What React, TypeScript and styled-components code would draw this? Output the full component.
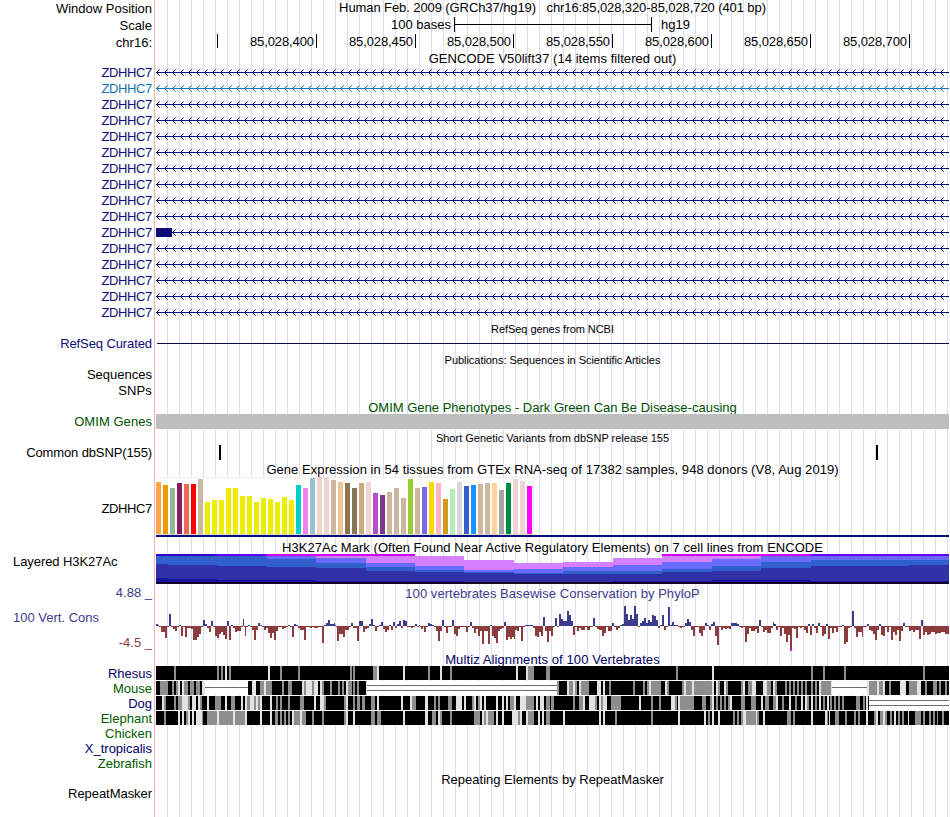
import React from 'react';
import styled, { createGlobalStyle } from 'styled-components';

const LEFT = 156;
const RIGHT = 949;
const PLOT = RIGHT - LEFT;

/* Colors */
const NAVY = '#0c0c78';
const TEAL = '#1474b4';
const GREEN = '#005000';
const POS = '#3c3c8c';
const NEG = '#8c3c3c';

/* GTEx */
const tissues: [number, string][] = [
  [52, '#ffa54f'], [49, '#ee9a00'], [46, '#8fbc8f'], [51, '#8b1c62'], [50, '#ee6a50'], [50, '#ff0000'],
  [55, '#cdb79e'], [32, '#eeee00'], [34, '#eeee00'], [34, '#eeee00'], [46, '#eeee00'], [46, '#eeee00'],
  [38, '#eeee00'], [38, '#eeee00'], [32, '#eeee00'], [36, '#eeee00'], [35, '#eeee00'], [32, '#eeee00'],
  [37, '#eeee00'], [34, '#eeee00'], [49, '#00cdcd'], [46, '#ee82ee'], [56, '#9ac0cd'], [57, '#eed5d2'],
  [57, '#eed5d2'], [54, '#cdb79e'], [52, '#eec591'], [51, '#8b7355'], [46, '#8b7355'], [51, '#cdaa7d'],
  [52, '#eed5d2'], [41, '#b452cd'], [39, '#7a378b'], [42, '#cdb79e'], [46, '#cdb79e'], [36, '#cdb79e'],
  [55, '#9acd32'], [46, '#cdb79e'], [47, '#7a67ee'], [52, '#ffd700'], [51, '#ffb6c1'], [35, '#cd9b1d'],
  [45, '#b4eeb4'], [52, '#d9d9d9'], [48, '#3a5fcd'], [49, '#1e90ff'], [50, '#cdb79e'], [51, '#cdb79e'],
  [51, '#ffd39b'], [44, '#a6a6a6'], [51, '#008b45'], [55, '#eed5d2'], [53, '#eed5d2'], [48, '#ff00ff'],
];

/* H3K27Ac: width, cap color, then heights of pink / periwinkle / blue / indigo / dark */
const marks: [number, string, number[]][] = [
  [12, '#2c00c8', [0, 0, 8, 14, 4]],
  [49, '#2c00c8', [0, 0, 9, 14, 3]],
  [50, '#6400ff', [0, 0, 10, 14, 2]],
  [49, '#d200f0', [0, 3, 8, 13, 2]],
  [50, '#d200f0', [2, 5, 5, 13, 1]],
  [49, '#d200f0', [7, 4, 4, 10, 1]],
  [49, '', [10, 4, 2, 9, 1]],
  [50, '', [10, 2, 1, 9, 0]],
  [49, '', [6, 4, 1, 8, 0]],
  [50, '', [5, 4, 3, 8, 0]],
  [49, '', [7, 6, 3, 7, 1]],
  [50, '#d200f0', [6, 7, 3, 9, 1]],
  [49, '#d200f0', [3, 7, 5, 9, 2]],
  [50, '#d200f0', [0, 6, 6, 12, 2]],
  [98, '#6400ff', [0, 4, 6, 15, 1]],
  [40, '#6400ff', [0, 4, 5, 16, 1]],
];
const markColors = ['#d480ff', '#6a6aff', '#3060cc', '#3030a8', '#1414a0'];

/* PhyloP scores, 2px per base unless "x<width>" follows */
const scores: [number, string][] = [
  [156, '2 1x1 -1x2 -6x4 -12 -1 12 -1 -3 -5 -1 1 -10 -1 -11 -2x4 -3 -14x4 -11 -8 -1 6 2 -2 -6 5 -1 -10 -12 -8 -6 -9 -13 5 -14 1 -2 -6 -5x4 -1 7x1 -1x1 -10x1 -1x2 1 -1 -4 -14 -4 3 1 -1 -4 -2 -7 -12 -7 -14 -5 -1x4 -3 -2 -1 1 -1 -11 2 1 -2 -4x4 -14 -1x4 -2 -1 -2x4 -1x4 -17 1 3 6 2x4 3x1 1x1 -1x1 -15 -8 -8 -11 -4x4 -1 3 -2x4 -15 5x4 -6 -3 -2 2 7 1 -5 -1 1 4 -3 -6 -4 1 -4 4 -2 2 5 -2 6 5 -1x4 -2 -1 2 -1'],
  [419, '1x1 -1x1 -3 -1x1 -6 -1 3 2 1 -1 -5 -15 -5 6 -1 -7 -1x4 6 -8 -10 -3 -1x6 -6 -1 4 -2 -7 -3 -10 -5 -18 -5 -5 -18 1 -10 -12 -17 -5 -3 -2 4 -14 -11 -13 -11 -13x1 -4 -5 -1 -15 -1 1x8 -2 -10 -11 -6 -10 9 -5 -16 -5 -10 -1 8 -1 12 7 5x4 15 11 5 -9 -1 -5 -2 -4x4 -1 -4x3 -1x1 -1 8 -1 -3 -4x3 -10 -7 -1 -5x4 3 -1 -4 -2 1 2 20 12 6 11 7 20 12 -1 3 5 8 3 6 4 11 10 6 -2 1 11 -4 -1 19'],
  [670, '1 4 1x4 -1 -2 -1x3 3 7 4 -4 -10 -1x4 -7 -10 -4 3 1 -4 2 4 -10 -19 -1 -4 -2 -3 -2 -3 3x6 2 -1 -2 -1 -16 -8 -2 -5x4 -3 -7 6 -1 -6 -4 -7x4 -2 4x1 2 -4 -1 -10 -2 -8 -16 -9 -23 -2 -3 -12 -1 -2 -1 -4 -7 2 -9 2 -2 -7 3 -1 -10 -8 2 -13 -2 -7 -2 -6 -1x4 1 -18 -16 -2 -1 15 -2 -11 -6 -6 -11x1 -1x4 2 -4 -5 -8 -14 -4 2 -9 -10 -1 -6 -1 -14 -6 -9 -4 -15 -5 3 -1 -1 -5 -4 -6 -4x4 -13 6 -9 -6 -9 -8 -6x4 -8 -7x4 -6x4 -8x4'],
];

/* Alignment runs: k = match, g = weak, l = faint, s = single line gap, d = double line gap */
const species = [
  { name: 'Rhesus', color: '#000064', runs: 'k156 g174 k176 g217 k219 g221 k223 l225 k227 g229 k231 l268 k270 g280 k282 g298 k300 g350 k352 g353 k355 g373 l377 k379 l403 k405 g428 k430 l440 k442 g450 k452 l516 k518 l526 g528 k534 g546 k550 g676 k678 l712 k714 g811 k813 g823 k825 g844 k846 g923 k925' },
  { name: 'Mouse', color: '#005a00', runs: 'k156 g160 k168 g172 k174 g176 l178 k180 l182 g184 k188 g190 k194 g196 k200 g202 l202 s205 k248 l252 k256 g260 l264 g266 k272 g282 k284 g288 k292 l302 g304 l306 g312 l314 k318 l320 g322 k324 g330 k332 g338 k340 g342 k344 l346 g348 k352 g353 k355 g357 k359 l366 d367 g557 k559 l567 g569 l573 g575 k577 l579 g581 k589 l597 k601 l603 k605 g609 k611 g633 k635 g643 k645 g647 l649 g651 k661 l665 g667 k669 g682 l684 g686 l692 g694 l712 k714 l716 g718 k720 l724 g726 k728 g741 l743 k745 g748 l752 k756 l763 g767 k771 l773 g775 k777 g785 k787 g789 k791 g793 k795 g797 k799 g801 k803 g805 k807 g811 k813 g815 k817 l819 g821 l831 s832 l867 g869 l877 g879 l883 k885 g889 k891 l900 k906 g909 l917 k921 g925 k927 g933 k937 g939 k941 g945 k947' },
  { name: 'Dog', color: '#000064', runs: 'k156 l162 g164 k166 g174 k176 g178 l182 g188 k190 l192 k196 l198 g200 k202 l207 k209 g215 k221 l225 k227 g231 k235 l241 k243 l245 g247 l250 g254 l256 g258 l260 k262 l270 k272 g276 k278 g280 k282 g288 k290 g300 k304 l314 k316 l320 g324 k326 g344 l346 k348 g353 k355 g357 k360 g362 k365 g371 k375 l377 k379 l401 k403 l410 g412 k416 l425 k428 g434 k436 g438 k440 g448 k452 l456 k462 l464 k466 g472 l474 k476 g478 l480 k482 l484 k486 l496 k498 l502 k504 l506 k508 g510 l514 k516 l520 g526 k534 l536 k538 l540 k544 g546 k550 g551 k554 g573 k575 g579 l583 k585 l589 l591 g595 k597 l599 g601 l603 k607 g611 k621 l639 k641 g651 k653 g659 k661 l671 g675 k677 l678 g680 k694 g702 k706 g710 l712 k714 g716 k718 g720 k722 g724 k726 g728 l730 k732 g741 k745 g751 k756 l761 k763 g765 k769 g773 l776 k778 g782 k784 l789 k791 g795 k797 l801 k803 l805 g807 k809 l811 k813 g815 k817 l819 k821 g823 k825 l827 k829 g830 k832 g834 k836 g838 k840 g842 k844 g856 k860 g863 k865 l866 k868 d869' },
  { name: 'Elephant', color: '#005a00', runs: 'k156 g164 k166 l178 k180 l182 k184 g186 l188 k190 l192 k194 l196 g202 k203 g207 l217 g219 l233 g235 l245 k247 l260 k262 l270 k272 g275 k278 g280 k282 g284 k286 g288 k290 l292 g294 l300 g302 k306 g312 k314 g322 k324 g344 l346 k348 l353 k355 g371 k375 g377 k381 l403 k405 l425 k428 g432 k436 l438 g440 k442 g450 k452 g474 k480 l482 g484 l486 g488 k494 l496 k498 l502 k504 l512 g518 l520 k522 l526 g528 k534 l538 k540 l542 k544 g546 k550 l563 k565 l599 k601 l603 k605 g615 k617 g651 k653 l678 k680 l704 k706 g708 k710 l712 k714 l718 k720 g733 k735 g737 k739 g741 l743 g746 l756 g757 k759 l763 k765 g787 k791 g793 k795 l811 k813 l825 g827 k828 l829 k830 g835 k839 g845 k847 g854 k856 g858 k860 l866 k868 g874 l876 k878 g880 l883 g885 k887 g890 k892 l894 k896 g898 k900 g902 k904 l908 k909 g915 k921 g923 k925 g929 k931 g933 k935 g937 k938 g942 k944' },
  { name: 'Chicken', color: '#005a00', runs: '' },
  { name: 'X_tropicalis', color: '#000064', runs: '' },
  { name: 'Zebrafish', color: '#005a00', runs: '' },
];
const runColors: Record<string, string> = { k: '#000000', g: '#8e8e8e', l: '#e2e2e2', s: '#ffffff', d: '#ffffff' };

const positions = ['', '85,028,400', '85,028,450', '85,028,500', '85,028,550', '85,028,600', '85,028,650', '85,028,700'];
const tickX = [217, 316, 415, 513, 612, 711, 810, 909];

const GeneLine = ({ color, exon }: { color: string; exon?: boolean }) => {
  const tips: number[] = [];
  for (let x = exon ? 16 : 0; x < PLOT - 1; x += 8) tips.push(x);
  return (
    <svg width={PLOT} height="16" shapeRendering="crispEdges">
      <rect x="0" y="8" width={PLOT} height="1" fill={color} />
      {tips.map((x) => (
        <g key={x} fill={color}>
          <rect x={x + 1} y="7" width="1" height="3" />
          <rect x={x + 2} y="6" width="1" height="1" />
          <rect x={x + 2} y="10" width="1" height="1" />
          <rect x={x + 3} y="5" width="1" height="1" opacity="0.7" />
          <rect x={x + 3} y="11" width="1" height="1" opacity="0.7" />
        </g>
      ))}
      {exon && <rect x="0" y="4" width="16" height="9" fill={color} />}
    </svg>
  );
};

const Wiggle = () => {
  const bars = scores.flatMap(([start, line]) => {
    let x = start - LEFT;
    return line.split(' ').map((token) => {
      const [h, w = '2'] = token.split('x');
      const bar = { x, w: Number(w), h: Number(h) };
      x += bar.w;
      return bar;
    });
  });
  return (
    <svg width={PLOT} height="52" shapeRendering="crispEdges">
      {bars.map((b, i) => (
        <rect
          key={i}
          x={b.x}
          y={b.h > 0 ? 26 - b.h : 26}
          width={b.w}
          height={Math.abs(b.h)}
          fill={b.h > 0 ? POS : NEG}
        />
      ))}
      <rect x="634" y="49" width="2" height="2" fill="#ff00ff" />
    </svg>
  );
};

const Alignment = ({ runs }: { runs: string }) => {
  const list = runs ? runs.split(' ').map((r) => ({ kind: r[0], x: Number(r.slice(1)) })) : [];
  return (
    <svg width={PLOT} height="15" shapeRendering="crispEdges">
      {list.map((run, i) => {
        const x = run.x - LEFT;
        const w = (list[i + 1]?.x ?? RIGHT) - run.x;
        const gaps = run.kind === 's' ? [6] : run.kind === 'd' ? [4, 9] : [];
        return (
          <g key={i}>
            <rect x={x} y="0" width={w} height="14" fill={runColors[run.kind]} />
            {gaps.map((y) => (
              <rect key={y} x={x} y={y} width={w} height="1" fill="#6e6e6e" />
            ))}
          </g>
        );
      })}
    </svg>
  );
};

const App = () => {
  return (
    <>
      <GlobalStyle />
      <Browser>
        <Row $height={16}>
          <Label $top={1}>Window Position</Label>
          <Heading $spacing={-0.09}>{'Human Feb. 2009 (GRCh37/hg19)   chr16:85,028,320-85,028,720 (401 bp)'}</Heading>
        </Row>
        <Row $height={17}>
          <Label $top={2}>Scale</Label>
          <ScaleBar>
            <span>100 bases</span>
            <Ruler />
            <span>hg19</span>
          </ScaleBar>
        </Row>
        <Row $height={17}>
          <Label $top={2}>chr16:</Label>
          <Ticks>
            {positions.map((p, i) => (
              <Tick key={p} $width={tickX[i] + 1 - (i ? tickX[i - 1] + 1 : LEFT)}>
                {p}
              </Tick>
            ))}
          </Ticks>
        </Row>
        <Row $height={14}>
          <Label />
          <Heading $top={1} $spacing={0.05}>GENCODE V50lift37 (14 items filtered out)</Heading>
        </Row>
        {Array.from({ length: 16 }, (_, i) => (
          <Row key={i} $height={16}>
            <Label $top={1} $color={i === 1 ? TEAL : NAVY} $spacing={-0.35}>ZDHHC7</Label>
            <GeneLine color={i === 1 ? TEAL : NAVY} exon={i === 10} />
          </Row>
        ))}

        <Row $height={15}>
          <Label />
          <Heading $small $top={1} $spacing={-0.06}>RefSeq genes from NCBI</Heading>
        </Row>
        <Row $height={16}>
          <Label $top={1} $color={NAVY} $spacing={-0.1}>RefSeq Curated</Label>
          <ThinLine />
        </Row>
        <Row $height={15}>
          <Label />
          <Heading $small $top={1} $spacing={-0.04}>Publications: Sequences in Scientific Articles</Heading>
        </Row>
        <Row $height={16}>
          <Label $top={1}>Sequences</Label>
        </Row>
        <Row $height={16}>
          <Label $top={1} $spacing={0.15}>SNPs</Label>
        </Row>
        <Row $height={16}>
          <Label />
          <Heading $top={2} $color={GREEN}>OMIM Gene Phenotypes - Dark Green Can Be Disease-causing</Heading>
        </Row>
        <Row $height={15}>
          <Label $color={GREEN} $spacing={0.05}>OMIM Genes</Label>
          <GrayBar />
        </Row>
        <Row $height={16}>
          <Label />
          <Heading $small $top={1}>Short Genetic Variants from dbSNP release 155</Heading>
        </Row>
        <Row $height={15}>
          <Label $spacing={-0.12}>Common dbSNP(155)</Label>
          <Variants>
            <Variant />
            <Variant />
          </Variants>
        </Row>
        <Row $height={17}>
          <Label />
          <Heading $top={2} $spacing={0.055}>Gene Expression in 54 tissues from GTEx RNA-seq of 17382 samples, 948 donors (V8, Aug 2019)</Heading>
        </Row>

        <Row $height={60}>
          <Label $top={24} $spacing={-0.35}>ZDHHC7</Label>
          <Expression>
            <Tissues>
              {tissues.map(([height, color], i) => (
                <Tissue key={i} $height={height} $color={color} />
              ))}
            </Tissues>
          </Expression>
        </Row>
        <Row $height={17}>
          <Label />
          <Heading $top={3} $spacing={0.04}>H3K27Ac Mark (Often Found Near Active Regulatory Elements) on 7 cell lines from ENCODE</Heading>
        </Row>
        <Row $height={30}>
          <Label $left $spacing={-0.07}>Layered H3K27Ac</Label>
          <Marks>
            {marks.map(([width, cap, layers], i) => (
              <MarkColumn key={i} $width={width}>
                {cap && <Layer $height={2} $color={cap} />}
                {layers.map((h, j) => (
                  <Layer key={j} $height={h} $color={markColors[j]} />
                ))}
                <Layer $height={2} $color="#140428" />
              </MarkColumn>
            ))}
          </Marks>
        </Row>

        <Row $height={16}>
          <Label $top={1} $color={POS}>4.88 _</Label>
          <Heading $top={2} $color={POS} $spacing={0.05}>100 vertebrates Basewise Conservation by PhyloP</Heading>
        </Row>
        <Row $height={52}>
          <Scores>
            <Label $left $top={10} $color={POS}>100 Vert. Cons</Label>
            <Label $top={9} $color={NEG}>-4.5 _</Label>
          </Scores>
          <Wiggle />
        </Row>
        <Row $height={14}>
          <Label />
          <Heading $color="#000064" $spacing={0.1}>Multiz Alignments of 100 Vertebrates</Heading>
        </Row>
        {species.map((s) => (
          <Row key={s.name} $height={15}>
            <Label $color={s.color}>{s.name}</Label>
            <Alignment runs={s.runs} />
          </Row>
        ))}
        <Row $height={14}>
          <Label />
          <Heading $top={1}>Repeating Elements by RepeatMasker</Heading>
        </Row>
        <Row $height={32}>
          <Label $top={1} $spacing={-0.05}>RepeatMasker</Label>
        </Row>
      </Browser>
    </>
  );
};

export default App;

const GlobalStyle = createGlobalStyle`
  body {
    margin: 0;
    background: white;
  }
  svg {
    display: block;
  }
`;

const Browser = styled.div`
  width: 950px;
  height: 817px;
  overflow: hidden;
  display: flex;
  flex-direction: column;
  font-family: 'Liberation Sans', Arial, sans-serif;
  font-size: 13px;
  line-height: 16px;
  color: black;
  white-space: pre;
  background: linear-gradient(#ffb4b4, #ffb4b4) 154px 0 / 1px 100% no-repeat,
    linear-gradient(white, white) 0 0 / 167px 100% no-repeat,
    repeating-linear-gradient(90deg, #dcdcf6 0 1px, white 1px 12px) 167px 0;
`;

const Row = styled.div<{ $height: number }>`
  display: grid;
  grid-template-columns: 156px ${PLOT}px;
  grid-template-rows: ${(props) => props.$height}px;
  height: ${(props) => props.$height}px;
  flex-shrink: 0;
`;

const Label = styled.div<{ $top?: number; $left?: boolean; $color?: string; $spacing?: number }>`
  height: 16px;
  padding: ${(props) => props.$top ?? 0}px 4px 0 13px;
  text-align: ${(props) => (props.$left ? 'left' : 'right')};
  letter-spacing: ${(props) => props.$spacing ?? 0}px;
  color: ${(props) => props.$color ?? 'black'};
`;

const Heading = styled.div<{ $top?: number; $small?: boolean; $color?: string; $spacing?: number }>`
  height: 16px;
  padding-top: ${(props) => props.$top ?? 0}px;
  text-align: center;
  font-size: ${(props) => (props.$small ? 11 : 13)}px;
  letter-spacing: ${(props) => props.$spacing ?? 0}px;
  color: ${(props) => props.$color ?? 'black'};
`;

const ScaleBar = styled.div`
  display: flex;
  padding: 1px 0 0 235px;
`;

const Ruler = styled.div`
  width: 196px;
  height: 15px;
  margin: 0 9px 0 3px;
  border: solid black;
  border-width: 0 1px;
  background: linear-gradient(black, black) 0 7px / 100% 1px no-repeat;
`;

const Ticks = styled.div`
  display: flex;
  padding-top: 1px;
`;

const Tick = styled.div<{ $width: number }>`
  box-sizing: border-box;
  width: ${(props) => props.$width}px;
  height: 14px;
  padding-right: 2px;
  border-right: 1px solid black;
  text-align: right;
  letter-spacing: -0.1px;
`;

const ThinLine = styled.div`
  height: 1px;
  margin: 8px 0 0 1px;
  background: #0c0c50;
`;

const GrayBar = styled.div`
  background: #bebebe;
`;

const Variants = styled.div`
  display: flex;
  gap: 655px;
  padding-left: 63px;
`;

const Variant = styled.div`
  width: 2px;
  height: 15px;
  background: black;
`;

const Expression = styled.div`
  box-sizing: border-box;
  height: 60px;
  border-bottom: 2px solid ${NAVY};
`;

const Tissues = styled.div`
  box-sizing: border-box;
  display: flex;
  align-items: flex-end;
  gap: 2px;
  width: 378px;
  height: 58px;
  border: solid #f0f0f0;
  border-width: 1px 1px 0 0;
  border-bottom: 1px solid #d8d8d8;
  background: white;
`;

const Tissue = styled.div<{ $height: number; $color: string }>`
  width: 5px;
  height: ${(props) => props.$height}px;
  background: ${(props) => props.$color};
`;

const Marks = styled.div`
  display: flex;
  align-items: flex-end;
`;

const MarkColumn = styled.div<{ $width: number }>`
  width: ${(props) => props.$width}px;
`;

const Layer = styled.div<{ $height: number; $color: string }>`
  height: ${(props) => props.$height}px;
  background: ${(props) => props.$color};
`;

const Scores = styled.div`
  display: flex;
  flex-direction: column;
`;
